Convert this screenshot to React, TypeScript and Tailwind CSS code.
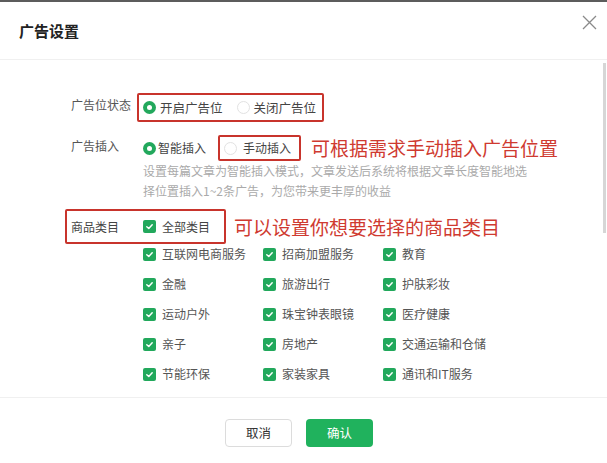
import React from "react";

const font = { fontFamily: '"Noto Sans CJK SC", "Noto Sans", sans-serif' };

function Radio({ checked }: { checked: boolean }) {
  return checked ? (
    <span className="flex h-[13px] w-[13px] shrink-0 items-center justify-center rounded-full bg-[#22a85c]">
      <span className="h-[5px] w-[5px] rounded-full bg-white" />
    </span>
  ) : (
    <span className="block h-[13px] w-[13px] shrink-0 rounded-full border border-[#e2e2e2] bg-white" />
  );
}

function Check() {
  return (
    <span className="flex h-[13px] w-[13px] shrink-0 items-center justify-center rounded-[2px] bg-[#22a85c]">
      <svg width="9" height="9" viewBox="0 0 10 10" fill="none">
        <path d="M2 5.2 L4.2 7.2 L8 3" stroke="white" strokeWidth="1.6" strokeLinecap="round" strokeLinejoin="round" />
      </svg>
    </span>
  );
}

const cats: (string | null)[] = [
  "互联网电商服务", "招商加盟服务", "教育",
  "金融", "旅游出行", "护肤彩妆",
  "运动户外", "珠宝钟表眼镜", "医疗健康",
  "亲子", "房地产", "交通运输和仓储",
  "节能环保", "家装家具", "通讯和IT服务",
  null, "", null,
];

export default function App() {
  return (
    <div className="flex h-[463px] w-[607px] flex-col overflow-hidden bg-white" style={font}>
      <div className="h-[2px] w-full bg-[#5c5c5c]" />
      {/* header */}
      <div className="flex h-[57px] shrink-0 items-start justify-between">
        <div className="ml-[19px] mt-[19px] text-[15px] font-semibold leading-[20px] text-[#222]">广告设置</div>
        <svg className="mr-[10px] mt-[13px]" width="15" height="15" viewBox="0 0 15 15">
          <path d="M1 1 L14 14 M14 1 L1 14" stroke="#8a8a8a" strokeWidth="1.3" />
        </svg>
      </div>
      <div className="h-[1px] w-full bg-[#f0f0f0]" />
      {/* body */}
      <div className="flex h-[337px] shrink-0 overflow-hidden">
        <div className="flex-1 pl-[65px]">
          {/* row 1 */}
          <div className="mt-[33px] flex h-[29px] items-center">
            <div className="ml-[6px] w-[66px] pb-[6px] text-[12px] leading-[16px] text-[#555]">广告位状态</div>
            <div className="flex h-[29px] items-center rounded-[2px] border-2 border-[#c8342c] pl-[4px] pr-[6px]">
              <Radio checked />
              <span className="ml-[4px] text-[12.5px] leading-[16px] text-[#444]">开启广告位</span>
              <span className="ml-[14px] flex"><Radio checked={false} /></span>
              <span className="ml-[4px] text-[12.5px] leading-[16px] text-[#444]">关闭广告位</span>
            </div>
          </div>
          {/* row 2 */}
          <div className="mt-[13px] flex h-[26px] items-center">
            <div className="ml-[6px] w-[72px] pb-[4px] text-[12px] leading-[16px] text-[#555]">广告插入</div>
            <Radio checked />
            <span className="ml-[2px] text-[12px] leading-[16px] text-[#444]">智能插入</span>
            <div className="ml-[12px] flex h-[26px] items-center rounded-[2px] border-2 border-[#c8342c] pl-[4px] pr-[8px]">
              <Radio checked={false} />
              <span className="ml-[6px] text-[12px] leading-[16px] text-[#444]">手动插入</span>
            </div>
            <span className="ml-[10px] text-[19px] leading-[24px] text-[#cf3a30]">可根据需求手动插入广告位置</span>
          </div>
          {/* description */}
          <div className="ml-[78px] w-[400px] text-[12px] leading-[20px] text-[#aaa]">
            设置每篇文章为智能插入模式，文章发送后系统将根据文章长度智能地选
            <br />
            择位置插入1~2条广告，为您带来更丰厚的收益
          </div>
          {/* row 3 */}
          <div className="mt-[8px] flex h-[35px] items-center">
            <div className="flex h-[35px] items-center rounded-[2px] border-2 border-[#c8342c] pl-[4px] pr-[14px]">
              <span className="w-[72px] text-[12px] leading-[16px] text-[#444]">商品类目</span>
              <Check />
              <span className="ml-[6px] text-[12px] leading-[16px] text-[#444]">全部类目</span>
            </div>
            <span className="ml-[8px] text-[19px] leading-[24px] text-[#cf3a30]">可以设置你想要选择的商品类目</span>
          </div>
          {/* grid */}
          <div className="ml-[78px] mt-[1px] grid w-[360px] grid-cols-3 gap-y-[12px]">
            {cats.map((c, i) => (
              <div key={i} className="flex h-[18px] items-center">
                {c !== null && (
                  <>
                    <Check />
                    {c && <span className="ml-[6px] whitespace-nowrap text-[12px] leading-[16px] text-[#555]">{c}</span>}
                  </>
                )}
              </div>
            ))}
          </div>
        </div>
        <div className="mr-[1px] mt-[3px] h-[170px] w-[3px] bg-[#d6d6d6]" />
      </div>
      <div className="h-[1px] w-full bg-[#f0f0f0]" />
      {/* footer */}
      <div className="flex flex-1 justify-center gap-[14px] pt-[21px]">
        <button className="ml-[-9px] h-[28px] w-[67px] rounded-[4px] border border-[#dcdcdc] bg-white text-[12.5px] text-[#333]">取消</button>
        <button className="h-[28px] w-[67px] rounded-[4px] bg-[#20b25d] text-[12.5px] text-white">确认</button>
      </div>
    </div>
  );
}
